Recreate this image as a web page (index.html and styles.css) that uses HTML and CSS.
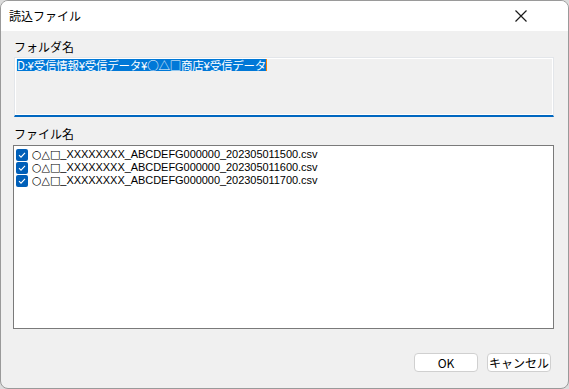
FILE: index.html
```html
<!DOCTYPE html>
<html lang="ja">
<head>
    <meta charset="UTF-8">
    <title>読込ファイル</title>
    <link rel="stylesheet" href="styles.css">
</head>
<body>
    <div class="window">
        <div class="titlebar">
            <span class="title">読込ファイル</span>
            <svg class="close" width="14" height="14" viewBox="0 0 14 14">
                <path d="M1.5 1.5 L12.5 12.5 M12.5 1.5 L1.5 12.5" stroke="#1a1a1a" stroke-width="1.2" fill="none"/>
            </svg>
        </div>
        <div class="content">
            <div class="label label-folder">フォルダ名</div>
            <div class="textbox">
                <span class="selected">D:¥受信情報¥受信データ¥○△□商店¥受信データ</span><span class="caret"></span>
            </div>
            <div class="label label-files">ファイル名</div>
            <ul class="filelist">
                <li><span class="check"><svg width="12" height="12" viewBox="0 0 12 12"><path d="M3 6.2 L5 8.2 L9 3.8" stroke="#fff" stroke-width="1.1" fill="none"/></svg></span><span class="name"><span class="shapes">○△□</span>_XXXXXXXX_ABCDEFG000000_202305011500.csv</span></li>
                <li><span class="check"><svg width="12" height="12" viewBox="0 0 12 12"><path d="M3 6.2 L5 8.2 L9 3.8" stroke="#fff" stroke-width="1.1" fill="none"/></svg></span><span class="name"><span class="shapes">○△□</span>_XXXXXXXX_ABCDEFG000000_202305011600.csv</span></li>
                <li><span class="check"><svg width="12" height="12" viewBox="0 0 12 12"><path d="M3 6.2 L5 8.2 L9 3.8" stroke="#fff" stroke-width="1.1" fill="none"/></svg></span><span class="name"><span class="shapes">○△□</span>_XXXXXXXX_ABCDEFG000000_202305011700.csv</span></li>
            </ul>
            <div class="buttons">
                <button class="btn">OK</button>
                <button class="btn">キャンセル</button>
            </div>
        </div>
    </div>
</body>
</html>
```

FILE: styles.css
```css
html, body {
    margin: 0;
    padding: 0;
    background: #dcdcdc;
}
body {
    font-family: "Noto Sans CJK JP", "Noto Sans", sans-serif;
    font-size: 12px;
    color: #000;
}
.window {
    width: 569px;
    height: 389px;
    box-sizing: border-box;
    border: 1px solid #9a9a9a;
    border-radius: 8px;
    background: #f0f0f0;
    overflow: hidden;
    display: flex;
    flex-direction: column;
}
.titlebar {
    height: 30px;
    background: #fff;
    display: flex;
    align-items: center;
    padding-left: 8px;
    padding-right: 40px;
}
.title {
    flex: 1;
    font-size: 12px;
    line-height: 14px;
}
.close {
    display: block;
}
.content {
    flex: 1;
    padding: 0 14px 0 12px;
    display: flex;
    flex-direction: column;
}
.label {
    line-height: 14px;
    padding-left: 1px;
}
.label-folder {
    margin-top: 9px;
}
.label-files {
    margin-top: 10px;
}
.textbox {
    margin-top: 3px;
    margin-left: 1px;
    height: 56px;
    border: 1px solid #e3e6ea;
    box-shadow: inset 0 0 0 1px #fff;
    border-bottom: 2px solid #0067c0;
    padding: 1px 0 0 2px;
    display: flex;
    align-items: flex-start;
}
.selected {
    background: #0078d7;
    color: #fff;
    line-height: 12px;
    height: 12px;
    font-size: 11.5px;
    letter-spacing: -0.25px;
}
.caret {
    width: 1px;
    height: 12px;
    background: #ff8000;
}
.filelist {
    list-style: none;
    margin: 4px 0 0 0;
    padding: 2px 0 0 2px;
    height: 180px;
    background: #fff;
    border: 1px solid #7a7a7a;
}
.filelist li {
    display: flex;
    align-items: center;
    height: 13px;
}
.name {
    font-family: "Liberation Sans", "DejaVu Sans", sans-serif;
    font-size: 11px;
    line-height: 13px;
    height: 13px;
    letter-spacing: -0.05px;
}
.shapes {
    font-family: "DejaVu Sans", sans-serif;
    font-size: 11px;
}
.check {
    width: 12px;
    height: 12px;
    border-radius: 2px;
    background: #005fb8;
    margin-right: 4px;
    display: flex;
}
.buttons {
    display: flex;
    justify-content: flex-end;
    gap: 9px;
    margin-top: 24px;
    padding-right: 3px;
}
.btn {
    width: 64px;
    height: 19px;
    background: #fff;
    border: 1px solid #d0d0d0;
    border-radius: 4px;
    font-family: "Noto Sans CJK JP", "Noto Sans", sans-serif;
    font-size: 12px;
    line-height: 14px;
    padding: 0;
    color: #000;
}
```
